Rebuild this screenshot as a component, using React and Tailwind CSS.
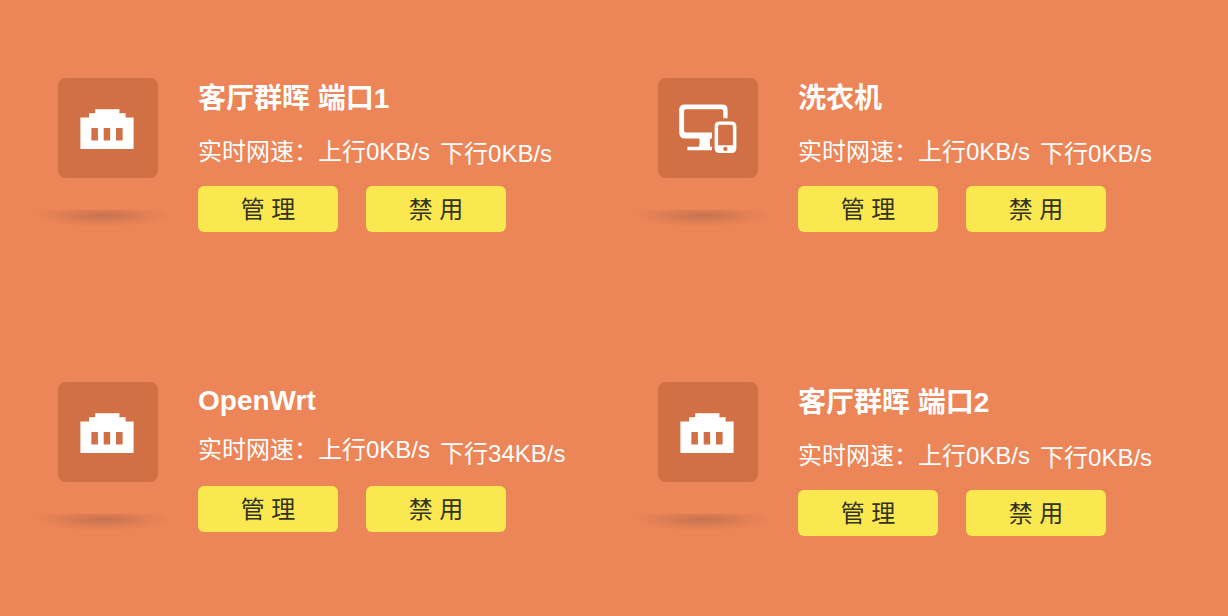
const devices = [
  { name: "客厅群晖 端口1", kind: "port", up: "0KB/s", down: "0KB/s" },
  { name: "洗衣机", kind: "device", up: "0KB/s", down: "0KB/s" },
  { name: "OpenWrt", kind: "port", up: "0KB/s", down: "34KB/s", latin: true },
  { name: "客厅群晖 端口2", kind: "port", up: "0KB/s", down: "0KB/s" },
];

function PortIcon() {
  return (
    <svg viewBox="0 0 100 100" className="size-full" fill="#fff" aria-hidden="true">
      <path
        fillRule="evenodd"
        d="M22.4 39.4H31V35.2H37.2V31.2H61.4V35.2H67.6V39.4H75.6V71H22.4ZM33.4 50V62.6H39.9V50ZM45.7 50V62.6H52.2V50ZM58 50V62.6H64.6V50Z"
      />
    </svg>
  );
}

function DevicesIcon() {
  return (
    <svg viewBox="0 0 100 100" className="size-full" fill="#fff" aria-hidden="true">
      <path d="M26.5 26.4H64.5Q69.6 26.4 69.6 31.5V40.2H65.2V33Q65.2 31.3 63.5 31.3H27.8Q26.1 31.3 26.1 33V52.6Q26.1 54.4 27.8 54.4H54V60.6H52.2Q51.2 64 52.2 68.8H54V72.3H29.4V68.8H41Q42.4 64 41.2 60.6H27Q21.2 60.6 21.2 54.8V31.6Q21.2 26.4 26.5 26.4Z" />
      <path
        fillRule="evenodd"
        d="M61.5 43.6H73.5Q78.4 43.6 78.4 48.6V70Q78.4 75 73.5 75H61.5Q56.6 75 56.6 70V48.6Q56.6 43.6 61.5 43.6ZM61.6 46.8Q60.1 46.8 60.1 48.3V67.2H74.9V48.3Q74.9 46.8 73.4 46.8ZM67.4 68.8A2.1 2.1 0 1 0 67.4 73A2.1 2.1 0 1 0 67.4 68.8Z"
      />
    </svg>
  );
}

function ActionButton({ children }) {
  return (
    <button
      type="button"
      className="h-[46px] w-[140px] rounded-md bg-[#fae850] pt-0.5 text-2xl text-[#333322]"
    >
      {children}
    </button>
  );
}

function DeviceCard({ device }) {
  return (
    <li className="flex gap-10">
      <div className="w-[100px] shrink-0">
        <div className="h-[100px] rounded-lg bg-[#d07044]">
          {device.kind === "port" ? <PortIcon /> : <DevicesIcon />}
        </div>
        <div className="-mr-3 -ml-6 mt-8 h-4 bg-[radial-gradient(ellipse_68px_11px_at_50%_35%,#c67351,#d47a52_35%,#e38056_70%,transparent)]" />
      </div>
      <div>
        <h2
          className={
            device.latin
              ? "text-[28px] leading-[38px] font-bold"
              : "text-[28px] leading-[42px] font-bold"
          }
        >
          {device.name}
        </h2>
        <p
          className={
            device.latin
              ? "mt-[13px] flex h-[38px] text-2xl leading-[34px] whitespace-nowrap"
              : "mt-[15px] flex h-9 text-2xl leading-[34px] whitespace-nowrap"
          }
        >
          <span>实时网速：</span>
          <span>上行{device.up}</span>
          <span className="ml-2.5 self-end">下行{device.down}</span>
        </p>
        <div className="mt-[15px] flex gap-7">
          <ActionButton>管 理</ActionButton>
          <ActionButton>禁 用</ActionButton>
        </div>
      </div>
    </li>
  );
}

export default function App() {
  return (
    <main className="min-h-screen bg-[#ec8557] pt-[78px] pr-7 pb-20 pl-[58px] font-['Liberation_Sans','Noto_Sans_CJK_SC',sans-serif] text-white">
      <ul className="grid grid-cols-2 gap-x-[58px] gap-y-[150px]">
        {devices.map((device) => (
          <DeviceCard key={device.name} device={device} />
        ))}
      </ul>
    </main>
  );
}
